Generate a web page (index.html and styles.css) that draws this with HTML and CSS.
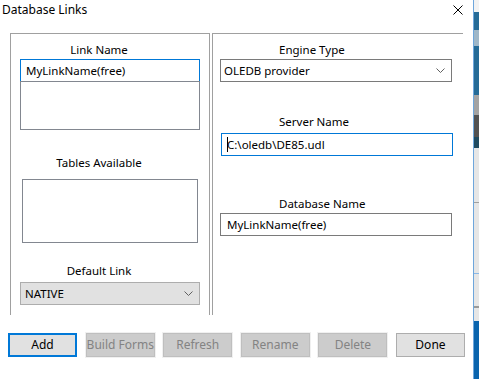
FILE: index.html
```html
<!DOCTYPE html>
<html lang="en">
<head>
  <meta charset="UTF-8">
  <title>Database Links</title>
  <link rel="stylesheet" href="styles.css">
</head>
<body>
  <div class="dialog">
    <!-- Title bar -->
    <div class="titlebar">
      <span class="title">Database Links</span>
      <svg class="close" width="10" height="10" viewBox="0 0 10 10">
        <path d="M0.5 0.5 L9.5 9.5 M9.5 0.5 L0.5 9.5" stroke="#000" stroke-width="1" fill="none"/>
      </svg>
    </div>

    <div class="groups">
      <!-- Left group -->
      <div class="group group-left">
        <div class="label">Link Name</div>
        <div class="field focused name-field">MyLinkName(free)</div>
        <div class="listbox link-list"></div>

        <div class="label tables-label">Tables Available</div>
        <div class="listbox tables-list"></div>

        <div class="label default-label">Default Link</div>
        <div class="combo combo-gray">
          <span>NATIVE</span>
          <svg class="chevron" width="9" height="5" viewBox="0 0 9 5"><polyline points="0.5,0.5 4.5,4.5 8.5,0.5" fill="none" stroke="#606060" stroke-width="1"/></svg>
        </div>
      </div>

      <!-- Right group -->
      <div class="group group-right">
        <div class="label">Engine Type</div>
        <div class="combo">
          <span>OLEDB provider</span>
          <svg class="chevron" width="9" height="5" viewBox="0 0 9 5"><polyline points="0.5,0.5 4.5,4.5 8.5,0.5" fill="none" stroke="#606060" stroke-width="1"/></svg>
        </div>

        <div class="label server-label">Server Name</div>
        <div class="field focused server-field"><span class="caret"></span>C:\oledb\DE85.udl</div>

        <div class="label db-label">Database Name</div>
        <div class="field db-field">MyLinkName(free)</div>
      </div>
    </div>

    <!-- Buttons -->
    <div class="buttons">
      <div class="btn btn-default">Add</div>
      <div class="btn disabled">Build Forms</div>
      <div class="btn disabled">Refresh</div>
      <div class="btn disabled">Rename</div>
      <div class="btn disabled">Delete</div>
      <div class="btn">Done</div>
    </div>
  </div>
  <div class="desktop"></div>
</body>
</html>
```

FILE: styles.css
```css
body {
  margin: 0;
  display: flex;
  height: 379px;
  overflow: hidden;
  background: #ffffff;
  font-family: "Noto Sans", "Open Sans", sans-serif;
  font-size: 11.5px;
  color: #000;
}

.dialog {
  width: 473px;
  height: 379px;
  background: #ffffff;
  border-right: 1px solid #6ea6dc;
  display: flex;
  flex-direction: column;
}

.desktop {
  flex: 1;
  background: linear-gradient(to bottom,
    #f2f2f2 0, #f2f2f2 12px,
    #256b97 12px, #256b97 30px,
    #9fb7c8 30px, #9fb7c8 46px,
    #256b97 46px, #256b97 95px,
    #a3a3a3 95px, #a3a3a3 115px,
    #525252 115px, #525252 137px,
    #1f4a5f 137px, #1f4a5f 148px,
    #e6e6e6 148px, #e6e6e6 202px,
    #a0a0a0 202px, #a0a0a0 203px,
    #e6e6e6 203px, #e6e6e6 273px,
    #8ab8e6 273px, #8ab8e6 274px,
    #e6e6e6 274px, #e6e6e6 306px,
    #9a9a9a 306px, #9a9a9a 308px,
    #e6e6e6 308px, #e6e6e6 321px,
    #0a64ad 321px);
}

/* Title bar */
.titlebar {
  height: 33px;
  display: flex;
  align-items: flex-start;
  justify-content: space-between;
}

.title {
  margin: 1px 0 0 2px;
  line-height: 18px;
  font-size: 12px;
}

.close {
  margin: 5px 10px 0 0;
}

/* Group boxes */
.groups {
  display: flex;
  padding-left: 10px;
  height: 282px;
}

.group {
  border: 1px solid #a0a0a0;
  border-bottom: none;
  display: flex;
  flex-direction: column;
  padding-top: 8px;
}

.group-left {
  box-sizing: border-box;
  width: 200px;
  padding-left: 9px;
}

.group-right {
  box-sizing: border-box;
  width: 251px;
  margin-left: 2px;
  padding-left: 7px;
  border-right: none;
}

.label {
  line-height: 16px;
  height: 16px;
  white-space: nowrap;
}

.group-left .label {
  width: 158px;
  text-align: center;
}

.group-right .label {
  padding-left: 59px;
}

.tables-label { margin-top: 25px; }
.default-label { margin-top: 20px; }
.server-label { margin-top: 32px; }
.db-label { margin-top: 40px; }

/* Fields */
.field,
.combo {
  box-sizing: border-box;
  height: 23px;
  border: 1px solid #7a7a7a;
  line-height: 21px;
  padding-left: 5px;
  background: #fff;
  white-space: nowrap;
}

.focused {
  border-color: #0078d7;
}

.name-field {
  width: 180px;
  margin-top: 1px;
}

.listbox {
  box-sizing: border-box;
  border: 1px solid #828790;
  background: #fff;
}

.link-list {
  width: 180px;
  height: 49px;
  margin-top: -1px;
}

.tables-list {
  width: 176px;
  height: 64px;
  margin: 8px 0 0 2px;
}

.combo {
  display: flex;
  align-items: center;
  justify-content: space-between;
  padding: 0 6px 0 3px;
  width: 232px;
  margin-top: 1px;
}

.combo-gray {
  width: 180px;
  margin-top: 3px;
  background: #e1e1e1;
  border-color: #adadad;
  padding-left: 4px;
}

.chevron {
  flex: none;
}

.server-field {
  width: 232px;
  margin: 3px 0 0 1px;
  padding-left: 5px;
}

.caret {
  display: inline-block;
  width: 1px;
  height: 15px;
  background: #000;
  vertical-align: -3px;
  margin-right: -1px;
}

.db-field {
  width: 232px;
  margin-top: 1px;
  padding-left: 6px;
}

/* Buttons */
.buttons {
  display: flex;
  gap: 8.6px;
  padding: 18px 0 0 8px;
}

.btn {
  box-sizing: border-box;
  width: 69px;
  height: 24px;
  border: 1px solid #adadad;
  background: #e1e1e1;
  text-align: center;
  line-height: 22px;
  font-size: 12px;
  white-space: nowrap;
}

.btn-default {
  border: 2px solid #0078d7;
  line-height: 20px;
}

.btn.disabled {
  background: #cccccc;
  border-color: #bfbfbf;
  color: #838383;
  box-shadow: 0 0 0 1px #f0f0f0;
}
```
